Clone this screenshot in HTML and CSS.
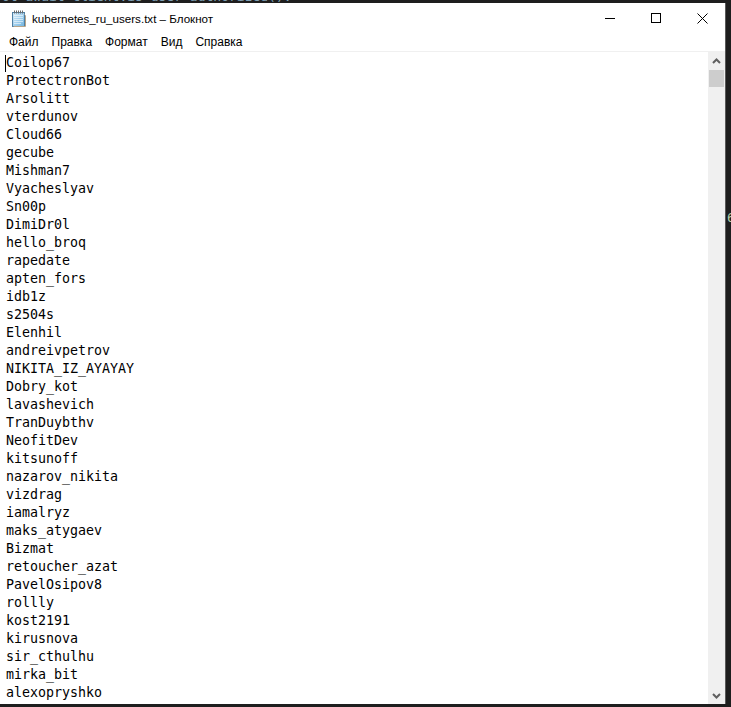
FILE: index.html
```html
<!DOCTYPE html>
<html lang="ru">
<head>
<meta charset="utf-8">
<title>kubernetes_ru_users.txt – Блокнот</title>
<link rel="stylesheet" href="styles.css">
</head>
<body>
<div class="desktop">
  <div class="bg-code">ot await client.is_user_authorized():</div>
  <div class="bg-side">6</div>
  <div class="window">
    <div class="titlebar">
      <svg class="app-icon" width="14" height="17" viewBox="0 0 14 17">
        <defs>
          <linearGradient id="pg" x1="0" y1="0" x2="1" y2="1">
            <stop offset="0" stop-color="#d9eefb"/>
            <stop offset="1" stop-color="#6fb3df"/>
          </linearGradient>
        </defs>
        <rect x="0.5" y="2.5" width="12" height="14" fill="url(#pg)" stroke="#4f7fa3"/>
        <path d="M12.5 4.5 L13.5 5.5 L13.5 16.5 L1.5 16.5" fill="none" stroke="#b7a58a"/>
        <path d="M2 5.5 H11 M2 7.5 H11 M2 9.5 H11 M2 11.5 H11 M2 13.5 H9" stroke="#ffffff" stroke-opacity="0.55"/>
        <path d="M2.5 0.5 V3.5 M4.5 0.5 V3.5 M6.5 0.5 V3.5 M8.5 0.5 V3.5 M10.5 0.5 V3.5" stroke="#6c6c6c"/>
      </svg>
      <span class="title">kubernetes_ru_users.txt – Блокнот</span>
      <div class="controls">
        <div class="ctl"><svg width="10" height="10" viewBox="0 0 10 10"><path d="M0 5.5 H10" stroke="#000" stroke-width="1"/></svg></div>
        <div class="ctl"><svg width="10" height="10" viewBox="0 0 10 10"><rect x="0.5" y="0.5" width="9" height="9" fill="none" stroke="#000"/></svg></div>
        <div class="ctl"><svg width="11" height="11" viewBox="0 0 11 11"><path d="M0.5 0.5 L10.5 10.5 M10.5 0.5 L0.5 10.5" stroke="#000" stroke-width="1"/></svg></div>
      </div>
    </div>
    <div class="menubar">
      <span class="menu-item">Файл</span>
      <span class="menu-item">Правка</span>
      <span class="menu-item">Формат</span>
      <span class="menu-item">Вид</span>
      <span class="menu-item">Справка</span>
    </div>
    <div class="content">
      <div class="editor">
        <span class="caret"></span>
        <div class="line">Coilop67</div>
        <div class="line">ProtectronBot</div>
        <div class="line">Arsolitt</div>
        <div class="line">vterdunov</div>
        <div class="line">Cloud66</div>
        <div class="line">gecube</div>
        <div class="line">Mishman7</div>
        <div class="line">Vyacheslyav</div>
        <div class="line">Sn00p</div>
        <div class="line">DimiDr0l</div>
        <div class="line">hello_broq</div>
        <div class="line">rapedate</div>
        <div class="line">apten_fors</div>
        <div class="line">idb1z</div>
        <div class="line">s2504s</div>
        <div class="line">Elenhil</div>
        <div class="line">andreivpetrov</div>
        <div class="line">NIKITA_IZ_AYAYAY</div>
        <div class="line">Dobry_kot</div>
        <div class="line">lavashevich</div>
        <div class="line">TranDuybthv</div>
        <div class="line">NeofitDev</div>
        <div class="line">kitsunoff</div>
        <div class="line">nazarov_nikita</div>
        <div class="line">vizdrag</div>
        <div class="line">iamalryz</div>
        <div class="line">maks_atygaev</div>
        <div class="line">Bizmat</div>
        <div class="line">retoucher_azat</div>
        <div class="line">PavelOsipov8</div>
        <div class="line">rollly</div>
        <div class="line">kost2191</div>
        <div class="line">kirusnova</div>
        <div class="line">sir_cthulhu</div>
        <div class="line">mirka_bit</div>
        <div class="line">alexopryshko</div>
      </div>
      <div class="scrollbar">
        <div class="sb-btn"><svg width="9" height="6" viewBox="0 0 9 6"><path d="M1 5 L4.5 1.5 L8 5" fill="none" stroke="#606060" stroke-width="2"/></svg></div>
        <div class="sb-thumb"></div>
        <div class="sb-track"></div>
        <div class="sb-btn"><svg width="9" height="6" viewBox="0 0 9 6"><path d="M1 1 L4.5 4.5 L8 1" fill="none" stroke="#606060" stroke-width="2"/></svg></div>
      </div>
    </div>
  </div>
</div>
</body>
</html>
```
FILE: styles.css
```css
html, body {
  margin: 0;
  padding: 0;
}
body {
  width: 731px;
  height: 707px;
  overflow: hidden;
  background: #1e1e1e;
}
.desktop {
  position: relative;
  width: 731px;
  height: 707px;
  overflow: hidden;
  background: #1e1e1e;
}
.bg-code {
  position: absolute;
  left: 2px;
  top: -11px;
  font-family: "DejaVu Sans Mono", monospace;
  font-size: 13px;
  line-height: 15px;
  color: #7f9fb3;
  white-space: nowrap;
}
.bg-side {
  position: absolute;
  left: 727px;
  top: 210px;
  font-family: "DejaVu Sans Mono", monospace;
  font-size: 13px;
  color: #b5cea8;
}
.window {
  position: absolute;
  left: 0;
  top: 3px;
  width: 725px;
  height: 701px;
  background: #ffffff;
  border-right: 1px solid #5a5a5a;
  display: flex;
  flex-direction: column;
  font-family: "Liberation Sans", Arial, sans-serif;
}
.titlebar {
  height: 30px;
  display: flex;
  align-items: center;
  flex-shrink: 0;
}
.app-icon {
  margin-left: 12px;
  margin-top: 1px;
  flex-shrink: 0;
}
.title {
  margin-left: 6px;
  font-size: 11.6px;
  color: #000;
  white-space: nowrap;
}
.controls {
  margin-left: auto;
  display: flex;
  height: 30px;
}
.ctl {
  width: 46px;
  height: 30px;
  display: flex;
  align-items: center;
  justify-content: center;
}
.ctl svg { display: block; }
.menubar {
  height: 18px;
  display: flex;
  align-items: center;
  padding-left: 2.5px;
  border-bottom: 1px solid #f0f0f0;
  flex-shrink: 0;
}
.menu-item {
  padding: 0 6.5px;
  font-size: 12px;
  line-height: 18px;
  color: #000;
  white-space: nowrap;
}
.content {
  flex: 1;
  display: flex;
  min-height: 0;
}
.editor {
  position: relative;
  flex: 1;
  padding: 2px 0 0 6px;
  font-family: "DejaVu Sans Mono", monospace;
  font-size: 13.3px;
  line-height: 18px;
  color: #000;
  overflow: hidden;
}
.line {
  height: 18px;
  white-space: nowrap;
}
.caret {
  position: absolute;
  left: 5px;
  top: 3px;
  width: 1px;
  height: 17px;
  background: #000;
}
.scrollbar {
  width: 17px;
  display: flex;
  flex-direction: column;
  background: #f0f0f0;
  flex-shrink: 0;
}
.sb-btn {
  height: 17px;
  display: flex;
  align-items: center;
  justify-content: center;
  flex-shrink: 0;
}
.sb-btn svg { display: block; }
.sb-thumb {
  height: 17px;
  margin: 1px 1px 0;
  background: #cdcdcd;
  flex-shrink: 0;
}
.sb-track { flex: 1; }
```
